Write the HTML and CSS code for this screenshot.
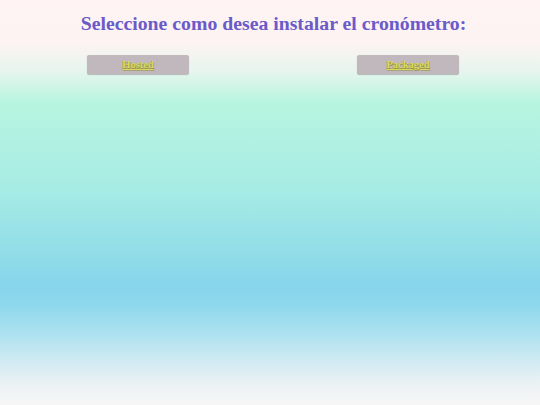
FILE: index.html
```html
<!DOCTYPE html>
<html lang="es">
<head>
<meta charset="utf-8">
<title>Cronómetro</title>
<link rel="stylesheet" href="styles.css">
</head>
<body>
<h1 class="title">Seleccione como desea instalar el cronómetro:</h1>
<div class="choices">
  <a class="btn" href="#">Hosted</a>
  <a class="btn" href="#">Packaged</a>
</div>
</body>
</html>
```
FILE: styles.css
```css
html, body {
  margin: 0;
  padding: 0;
  height: 100%;
}
body {
  font-family: "Liberation Serif", "Times New Roman", serif;
  background: linear-gradient(to bottom,
    #fff3f3 0px, #fdf3f3 42px, #e8f5ee 70px, #b8f5e0 102px,
    #a6ebe4 190px, #86d5ea 285px, #8ed8ec 305px, #a8e0ef 330px,
    #cfeaf2 360px, #ecf2f4 385px, #f7f6f6 405px);
  min-height: 405px;
}
.title {
  margin: 0;
  padding: 11px 0 0 7px;
  text-align: center;
  font-size: 19.75px;
  line-height: 24px;
  font-weight: bold;
  color: #6a5bc8;
}
.choices {
  display: flex;
  gap: 168px;
  padding: 20px 0 0 87px;
}
.btn {
  display: block;
  width: 102px;
  height: 19px;
  box-sizing: border-box;
  background: #c1b8bd;
  border-radius: 2px;
  box-shadow: 0 1px 1px rgba(100, 100, 100, 0.4);
  text-align: center;
  font-size: 10.5px;
  line-height: 19px;
  font-weight: bold;
  color: #dcd862;
  text-shadow: 0.5px 0.5px 0 #8c8c3a, -0.5px -0.5px 0 #a0a040;
  text-decoration: underline;
}
```
